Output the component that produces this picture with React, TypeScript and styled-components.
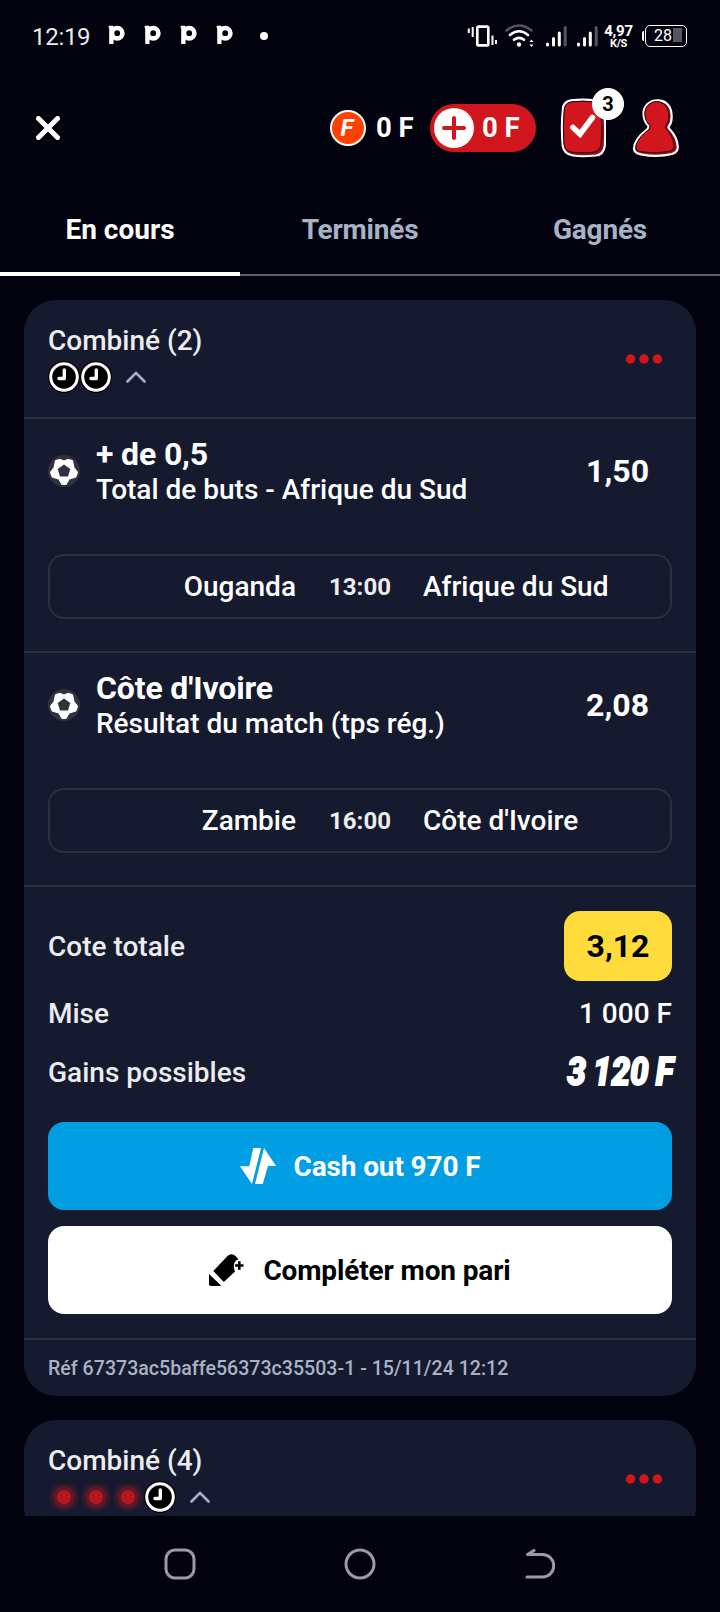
import React from "react";
import styled, { createGlobalStyle } from "styled-components";

const Global = createGlobalStyle`
  * { box-sizing: border-box; }
  body { margin: 0; background: #03030f; font-family: Roboto, "Liberation Sans", sans-serif; color: #fff; }
`;

const Screen = styled.div`
  width: 720px;
  height: 1612px;
  display: flex;
  flex-direction: column;
  background: #03030f;
  overflow: hidden;
`;

const StatusBar = styled.div`
  height: 72px;
  flex: none;
  display: flex;
  align-items: center;
  justify-content: space-between;
  padding: 0 33px 0 32px;
`;

const StatusGroup = styled.div`
  display: flex;
  align-items: center;
`;

const Clock = styled.span`
  width: 76px;
  padding-top: 2px;
  font-size: 24px;
  line-height: 30px;
  color: #e9e9ee;
  font-weight: 400;
  letter-spacing: -0.3px;
`;

const Speed = styled.div`
  width: 28px;
  margin: 2px 9px 0 -1px;
  display: flex;
  flex-direction: column;
  align-items: center;
  font-weight: 700;
  font-size: 15px;
  line-height: 13px;
  letter-spacing: -0.2px;
  small { font-size: 11px; line-height: 11px; }
`;

const Battery = styled.div`
  width: 42px;
  height: 22px;
  border: 1.5px solid #fff;
  border-radius: 5px;
  display: flex;
  align-items: center;
  margin-left: 3px;
  padding-left: 8px;
  font-size: 16px;
  line-height: 18px;
  background: linear-gradient(#55555f, #55555f) 27px 2px / 9px 14px no-repeat;
`;

const BatteryTip = styled.div`
  width: 2.5px;
  height: 10px;
  border-radius: 2px 0 0 2px;
  background: #fff;
  margin-right: -2px;
`;

const Header = styled.header`
  height: 112px;
  flex: none;
  display: flex;
  align-items: center;
  padding: 0 40px 0 36px;
`;

const Spacer = styled.div`
  flex: 1;
`;

const Coin = styled.div`
  width: 36px;
  height: 36px;
  border-radius: 50%;
  border: 2px solid #fff;
  background: #ff4000;
  display: flex;
  align-items: center;
  justify-content: center;
  font: italic 700 24px Roboto, sans-serif;
  padding-right: 2px;
`;

const Amount = styled.span`
  font-weight: 700;
  font-size: 27.5px;
  line-height: 32px;
  white-space: nowrap;
`;

const CoinAmount = styled(Amount)`
  width: 64px;
  padding-left: 10px;
`;

const Deposit = styled.div`
  width: 106px;
  height: 48px;
  border-radius: 24px;
  background: #d1161e;
  display: flex;
  align-items: center;
  padding-left: 4px;
  gap: 8px;
  margin-right: 24px;
`;

const Plus = styled.div`
  width: 40px;
  height: 40px;
  border-radius: 50%;
  background: #fff;
  display: flex;
  align-items: center;
  justify-content: center;
`;

const Tickets = styled.div`
  position: relative;
  width: 46px;
  height: 60px;
  margin-right: 26px;
`;

const Count = styled.span`
  position: absolute;
  left: 32px;
  top: -10px;
  width: 32px;
  height: 32px;
  border-radius: 50%;
  background: #fff;
  color: #000;
  font-weight: 700;
  font-size: 20px;
  line-height: 32px;
  text-align: center;
`;

const Tabs = styled.nav`
  height: 92px;
  flex: none;
  display: grid;
  grid-template-columns: repeat(3, 240px);
`;

const Tab = styled.div<{ $active?: boolean }>`
  display: flex;
  align-items: center;
  justify-content: center;
  font-size: 28px;
  font-weight: 700;
  letter-spacing: ${(p) => (p.$active ? "0" : "-0.2px")};
  padding-top: ${(p) => (p.$active ? "2px" : "0")};
  color: ${(p) => (p.$active ? "#fff" : "#a8b2c7")};
  border-bottom: ${(p) => (p.$active ? "4px solid #fff" : "2px solid #595c6b")};
`;

const List = styled.main`
  flex: 1;
  min-height: 0;
  overflow: hidden;
  padding: 24px 24px 0;
  display: flex;
  flex-direction: column;
  gap: 24px;
`;

const Card = styled.article`
  flex: none;
  background: #161a2e;
  border-radius: 32px;
`;

const CardHead = styled.div`
  height: 119px;
  display: flex;
  align-items: center;
  justify-content: space-between;
  padding: 0 33px 0 24px;
  border-bottom: 2px solid #2d2f42;
`;

const HeadText = styled.div`
  display: flex;
  flex-direction: column;
`;

const Title = styled.h2`
  margin: 0;
  font-size: 28px;
  line-height: 32px;
  font-weight: 500;
  color: #ececf0;
`;

const Marks = styled.div`
  display: flex;
  align-items: center;
  height: 32px;
  margin-top: 4px;
`;

const Bet = styled.section`
  height: 234px;
  border-bottom: 2px solid #2d2f42;
  padding: 20px 24px 32px;
  display: flex;
  flex-direction: column;
  justify-content: space-between;
`;

const Pick = styled.div`
  display: flex;
  align-items: center;
  height: 64px;
`;

const PickText = styled.div`
  flex: 1;
  padding-left: 16px;
  strong { display: block; font-size: 32px; line-height: 36px; font-weight: 700; margin-bottom: 2px; letter-spacing: -0.15px; }
  span { display: block; font-size: 28px; line-height: 32px; font-weight: 500; }
`;

const Odds = styled.span`
  font-size: 32px;
  font-weight: 700;
  margin-right: 23px;
`;

const Fixture = styled.div`
  height: 65px;
  border: 2px solid #2d2f42;
  border-radius: 16px;
  display: grid;
  grid-template-columns: 1fr 126px 1fr;
  align-items: center;
  font-size: 28px;
  font-weight: 500;
  span:first-child { text-align: right; padding-right: 1px; }
`;

const Kickoff = styled.time`
  font-size: 24px;
  font-weight: 700;
  text-align: center;
  color: #ececf0;
`;

const Summary = styled.section`
  padding: 24px 24px 24px;
  border-bottom: 2px solid #2d2f42;
`;

const Row = styled.div<{ $h: number }>`
  height: ${(p) => p.$h}px;
  display: flex;
  align-items: center;
  justify-content: space-between;
  font-size: 28px;
  font-weight: 500;
`;

const Label = styled.span`
  color: #ececf0;
`;

const Total = styled.span`
  width: 108px;
  height: 70px;
  border-radius: 16px;
  background: #ffdc3c;
  color: #000;
  font-size: 32px;
  font-weight: 700;
  display: flex;
  align-items: center;
  justify-content: center;
`;

const Gain = styled.span`
  font-family: Roboto, sans-serif;
  font-style: italic;
  font-weight: 900;
  font-size: 39.5px;
  line-height: 44px;
  white-space: nowrap;
  -webkit-text-stroke: 1.8px #fff;
  transform: translateX(1px) scaleX(0.84);
  transform-origin: right center;
  word-spacing: -1.5px;
`;

const Actions = styled.div`
  margin-top: 23px;
  display: flex;
  flex-direction: column;
  gap: 16px;
`;

const Button = styled.button<{ $bg: string; $fg: string }>`
  width: 100%;
  height: 88px;
  border: 0;
  border-radius: 16px;
  background: ${(p) => p.$bg};
  color: ${(p) => p.$fg};
  display: flex;
  align-items: center;
  justify-content: center;
  gap: 18px;
  font: 700 28px Roboto, sans-serif;
  letter-spacing: -0.13px;
`;

const Ref = styled.footer`
  height: 56px;
  padding: 0 24px;
  display: flex;
  align-items: center;
  font-size: 19.6px;
  font-weight: 500;
  color: #a8b2c7;
`;

const NavBar = styled.footer`
  height: 96px;
  flex: none;
  display: grid;
  grid-template-columns: repeat(3, 180px);
  justify-content: center;
  justify-items: center;
  align-items: center;
`;

const PeyIcon = () => (
  <svg width="36" height="24" viewBox="0 0 36 24">
    <path d="M0.500 3L1 1.800H5.500V20H1.200V4.500Z" fill="#fff" />
    <circle cx="9.200" cy="9.200" r="5.200" stroke="#fff" strokeWidth="4.600" fill="none" />
  </svg>
);

const DotIcon = styled.svg`
  margin-left: 7px;
`;

const Dot = () => (
  <DotIcon width="10" height="10" viewBox="0 0 10 10"><circle cx="5" cy="5" r="4" fill="#fff" /></DotIcon>
);

const VibrateIcon = styled.svg`
  margin-right: 8px;
`;

const Vibrate = () => (
  <VibrateIcon width="30" height="24" viewBox="0 0 30 24" stroke="#fff" fill="none">
    <rect x="10.3" y="2.600" width="11" height="18.800" rx="1.2" strokeWidth="2.6" />
    <path d="M1.800 4.500v4.500M5.700 3v10M25.500 11.500v9.500M29 16v4" strokeWidth="2" />
  </VibrateIcon>
);

const WifiIcon = styled.svg`
  margin-right: 9px;
`;

const Wifi = () => (
  <WifiIcon width="30" height="24" viewBox="0 0 30 24" fill="none" strokeLinecap="round">
    <path d="M1.500 6.500Q14 -3.500 26.500 6.500" stroke="#55555f" strokeWidth="2.6" />
    <path d="M5 11Q14 3.500 23 11M9 15.800Q14 11.800 19 15.800" stroke="#fff" strokeWidth="2.6" />
    <circle cx="14" cy="20.500" r="2.200" fill="#fff" />
    <path d="M24.500 18l2-2.500 2 2.500zM24.500 20.500l2 2.500 2-2.500z" fill="#fff" />
  </WifiIcon>
);

const Signal = () => (
  <svg width="31" height="24" viewBox="0 0 31 24" strokeLinecap="round" strokeWidth="3">
    <path d="M3.500 20v1M9.500 14.500V21M15.300 9V21" stroke="#fff" />
    <path d="M21.200 3.500V21" stroke="#55555f" />
  </svg>
);

const Close = () => (
  <svg width="24" height="24" viewBox="0 0 24 24">
    <path d="M2.500 2.500l19 19M21.500 2.500l-19 19" stroke="#fff" strokeWidth="5" strokeLinecap="round" />
  </svg>
);

const Ticket = () => (
  <svg width="46" height="60" viewBox="0 0 46 60">
    <path d="M11 2.300Q23 1 35 2.300Q43 3.500 44 12Q46 28 44.800 48Q43.500 56.500 36 57.500Q22 59 13 57.500Q4 56 2.700 48Q1 28 3 10Q4 3.500 11 2.300Z" fill="#8d101a" stroke="#fff" strokeWidth="2.200" />
    <path d="M12 3.800Q23 2.600 33 3.800Q40 5 40.800 12Q42.500 28 41.200 46Q40 53.500 33 54.300Q22 55.500 12 54.300Q5 53 4 46Q2.500 28 4.300 11Q5 4.800 12 3.800Z" fill="#d1161e" stroke="#21050e" strokeWidth="1" />
    <path d="M13 29.500l7 6.500L32.500 19.500" fill="none" stroke="#fff" strokeWidth="5.600" strokeLinecap="round" />
  </svg>
);

const Person = () => (
  <svg width="48" height="60" viewBox="0 0 48 60">
    <path d="M25.500 2.300C17 2.300 11.500 8.500 11.500 15.500C11.500 21 14 25.500 16.500 28C17 30 15.500 31.500 13.500 33C6.500 38 2 45 2 50.500Q2 55 9 56.300Q25 59.500 40 56Q46 54 45.800 49C45.500 42 42 35.500 37 30.500Q36 29.500 37 28C39.500 25 40 21 39.500 16C39 8 34 2.300 25.500 2.300Z" fill="#8d101a" stroke="#fff" strokeWidth="2.200" />
    <path d="M24.500 3.500C18 3.500 12.800 9 12.800 15.500C12.800 20.500 15 25 18 27.500Q18.500 29.500 16.500 32C9 37 4 44 4 50Q4.500 53.500 11 54Q25 56 37.500 53.300Q42.500 52 42 47.500C41.500 41 38 34.500 34 30.500Q32.800 28.800 34 27.300C36.500 24 37.200 20 36.700 15.500C36 8.500 31 3.500 24.500 3.500Z" fill="#d1161e" stroke="#21050e" strokeWidth="1" />
  </svg>
);

const Pending = () => (
  <svg width="32" height="32" viewBox="0 0 32 32">
    <circle cx="16" cy="16" r="16" fill="#000" />
    <circle cx="16" cy="16" r="13.300" fill="#000" stroke="#fff" strokeWidth="3" />
    <path d="M16.300 9v8.500H11" fill="none" stroke="#fff" strokeWidth="3.400" strokeLinecap="round" strokeLinejoin="round" />
  </svg>
);

const Lost = () => (
  <svg width="32" height="32" viewBox="0 0 32 32">
    <circle cx="16" cy="16" r="14.500" fill="#321a2c" />
    <circle cx="16" cy="16" r="11" fill="#5b192a" />
    <circle cx="16" cy="16" r="7.200" fill="#b61820" />
  </svg>
);

const ChevronIcon = styled.svg`
  margin-left: 14px;
`;

const Chevron = () => (
  <ChevronIcon width="20" height="12" viewBox="0 0 20 12">
    <path d="M1.500 10.500L10 1.800L18.500 10.500" fill="none" stroke="#a8b2c7" strokeWidth="2.600" strokeLinecap="round" strokeLinejoin="round" />
  </ChevronIcon>
);

const More = () => (
  <svg width="38" height="10" viewBox="0 0 38 10" fill="#d1161e">
    <circle cx="5.500" cy="5" r="4.700" /><circle cx="19" cy="5" r="4.700" /><circle cx="32.500" cy="5" r="4.700" />
  </svg>
);

const Ball = () => (
  <svg width="32" height="32" viewBox="0 0 32 32">
    <circle cx="16" cy="16" r="16" fill="#32323f" />
    <path d="M7 5.500Q9.500 3.500 12.500 4L16 5.500L19.500 4Q22.500 3.500 25 5.500L26.500 12.500L30 17Q29.500 20.500 28 22.500L21.500 24.500L18.500 29.700Q16 30.500 13.500 29.700L10.500 24.500L4 22.500Q2.500 20.500 2 17L5.500 12.500Z" fill="#fff" />
    <path d="M16 9.500L22.300 14L20 21.500H12L9.700 14Z" fill="#32323f" />
  </svg>
);

const CashIcon = () => (
  <svg width="36" height="36" viewBox="0 0 36 36" fill="#fff">
    <path d="M13.300 0H21L12 36L0 18.300H9.300Z" />
    <path d="M24 0L36 18H28L22.700 36H15Z" />
  </svg>
);

const CompleteIcon = () => (
  <svg width="36" height="32" viewBox="0 0 36 32">
    <path d="M4.300 17L18.500 2Q22.500 -1.500 26.500 2L29.500 5.200Q22.500 8 26 17.500L14.800 28Z" fill="#000" />
    <path d="M0 20L12 31.500Q11.500 32 10 32H2Q0 32 0 30Z" fill="#000" />
    <path d="M30.300 7.300v8.400M26.100 11.500h8.400" stroke="#000" strokeWidth="2.600" />
  </svg>
);

interface BetCardProps {
  count: number;
  lost: number;
  pending: number;
  children?: React.ReactNode;
}

const BetCard = ({ count, lost, pending, children }: BetCardProps) => (
  <Card>
    <CardHead>
      <HeadText>
        <Title>Combiné ({count})</Title>
        <Marks>
          {Array.from({ length: lost }, (_, i) => <Lost key={`l${i}`} />)}
          {Array.from({ length: pending }, (_, i) => <Pending key={`p${i}`} />)}
          <Chevron />
        </Marks>
      </HeadText>
      <More />
    </CardHead>
    {children}
  </Card>
);

const bets = [
  { pick: "+ de 0,5", market: "Total de buts - Afrique du Sud", odds: "1,50", home: "Ouganda", time: "13:00", away: "Afrique du Sud" },
  { pick: "Côte d'Ivoire", market: "Résultat du match (tps rég.)", odds: "2,08", home: "Zambie", time: "16:00", away: "Côte d'Ivoire" },
];

export default function App() {
  return (
    <Screen>
      <Global />
      <StatusBar>
        <StatusGroup>
          <Clock>12:19</Clock>
          <PeyIcon /><PeyIcon /><PeyIcon /><PeyIcon />
          <Dot />
        </StatusGroup>
        <StatusGroup>
          <Vibrate /><Wifi /><Signal /><Signal />
          <Speed>4,97<small>K/S</small></Speed>
          <BatteryTip />
          <Battery>28</Battery>
        </StatusGroup>
      </StatusBar>
      <Header>
        <Close />
        <Spacer />
        <Coin>F</Coin>
        <CoinAmount>0 F</CoinAmount>
        <Deposit>
          <Plus>
            <svg width="24" height="24" viewBox="0 0 24 24"><path d="M12 2v20M2 12h20" stroke="#d1161e" strokeWidth="4" strokeLinecap="round" /></svg>
          </Plus>
          <Amount>0 F</Amount>
        </Deposit>
        <Tickets><Ticket /><Count>3</Count></Tickets>
        <Person />
      </Header>
      <Tabs>
        <Tab $active>En cours</Tab>
        <Tab>Terminés</Tab>
        <Tab>Gagnés</Tab>
      </Tabs>
      <List>
        <BetCard count={2} lost={0} pending={2}>
          {bets.map((b) => (
            <Bet key={b.pick}>
              <Pick>
                <Ball />
                <PickText><strong>{b.pick}</strong><span>{b.market}</span></PickText>
                <Odds>{b.odds}</Odds>
              </Pick>
              <Fixture><span>{b.home}</span><Kickoff>{b.time}</Kickoff><span>{b.away}</span></Fixture>
            </Bet>
          ))}
          <Summary>
            <Row $h={70}><Label>Cote totale</Label><Total>3,12</Total></Row>
            <Row $h={64}><Label>Mise</Label><span>1 000 F</span></Row>
            <Row $h={54}><Label>Gains possibles</Label><Gain>3 120 F</Gain></Row>
            <Actions>
              <Button $bg="#029ee4" $fg="#fff"><CashIcon />Cash out 970 F</Button>
              <Button $bg="#fff" $fg="#000"><CompleteIcon />Compléter mon pari</Button>
            </Actions>
          </Summary>
          <Ref>Réf 67373ac5baffe56373c35503-1 - 15/11/24 12:12</Ref>
        </BetCard>
        <BetCard count={4} lost={3} pending={1} />
      </List>
      <NavBar>
        <svg width="32" height="32" viewBox="0 0 32 32"><rect x="2" y="2" width="28" height="28" rx="9" fill="none" stroke="#9b9ba1" strokeWidth="3" /></svg>
        <svg width="32" height="32" viewBox="0 0 32 32"><circle cx="16" cy="16" r="14" fill="none" stroke="#9b9ba1" strokeWidth="3" /></svg>
        <svg width="30" height="32" viewBox="0 0 30 32"><path d="M9 2.500L2.500 6.500H17.500A10.800 10.800 0 0 1 17.500 29H2" fill="none" stroke="#9b9ba1" strokeWidth="3" strokeLinecap="round" strokeLinejoin="round" /></svg>
      </NavBar>
    </Screen>
  );
}
